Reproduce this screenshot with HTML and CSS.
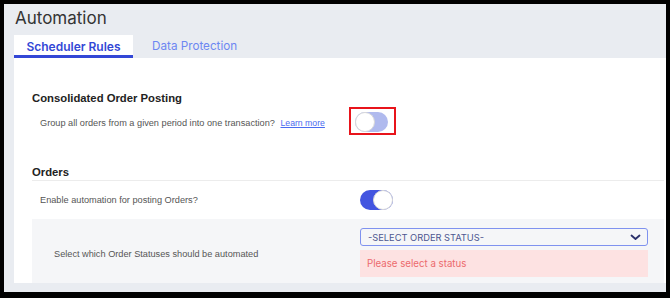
FILE: index.html
```html
<!DOCTYPE html>
<html lang="en">
<head>
    <meta charset="UTF-8">
    <meta name="viewport" content="width=device-width, initial-scale=1.0">
    <title>Automation</title>
    <link rel="stylesheet" href="styles.css">
</head>
<body>
    <div class="frame">
        <div class="page-title">Automation</div>
        <div class="tabs">
            <div class="tab active">Scheduler Rules</div>
            <div class="tab">Data Protection</div>
        </div>
        <div class="panel">
            <div class="section-title first">Consolidated Order Posting</div>
            <div class="row consolidated">
                <div class="label">Group all orders from a given period into one transaction? <a href="#" class="learn">Learn more</a></div>
                <div class="highlight">
                    <span class="toggle off"><span class="knob"></span></span>
                </div>
            </div>

            <div class="section-title orders">Orders</div>
            <div class="row enable">
                <div class="label">Enable automation for posting Orders?</div>
                <span class="toggle on"><span class="knob"></span></span>
            </div>
            <div class="row statuses">
                <div class="label">Select which Order Statuses should be automated</div>
                <div class="field">
                    <div class="select">
                        <span>-SELECT ORDER STATUS-</span>
                        <svg width="11" height="7" viewBox="0 0 11 7"><path d="M1.5 1.5 L5.5 5 L9.5 1.5" fill="none" stroke="#2a306b" stroke-width="1.8" stroke-linecap="round" stroke-linejoin="round"/></svg>
                    </div>
                    <div class="error">Please select a status</div>
                </div>
            </div>
        </div>
    </div>
</body>
</html>
```

FILE: styles.css
```css
        body {
            margin: 0;
            background-color: #000;
            font-family: "Liberation Sans", Arial, sans-serif;
        }
        .frame {
            margin: 4px 4px 6px 4px;
            height: 288px;
            background-color: #e9ecf1;
            display: flex;
            flex-direction: column;
        }
        .page-title {
            font-family: Inter, "Open Sans", sans-serif;
            font-size: 17px;
            color: #333;
            padding: 4px 11px 0;
            height: 27px;
        }
        .tabs {
            display: flex;
            margin-left: 10px;
            height: 23px;
        }
        .tab {
            font-family: Inter, "Open Sans", sans-serif;
            font-size: 11.7px;
            color: #6d87f2;
            padding: 0 12px 0 19px;
            line-height: 23px;
            white-space: nowrap;
        }
        .tab.active {
            background-color: #fff;
            color: #3347d6;
            font-weight: 600;
            font-size: 12px;
            padding: 0;
            width: 119px;
            text-align: center;
            border-bottom: 3px solid #3347d6;
            line-height: 23px;
            height: 20px;
        }
        .panel {
            flex: 1;
            background-color: #fff;
            margin: 0 0 9px 10px;
            padding: 0 2px 0 18px;
        }
        .section-title {
            font-size: 11.3px;
            font-weight: bold;
            color: #222;
            line-height: 14px;
        }
        .section-title.first {
            padding-top: 33px;
        }
        .section-title.orders {
            margin-top: 30px;
            padding-bottom: 1px;
            border-bottom: 1px solid #ececec;
        }
        .row {
            display: flex;
            align-items: center;
        }
        .label {
            font-size: 9.2px;
            color: #555;
        }
        .consolidated {
            margin-top: 2px;
        }
        .consolidated .label {
            width: 309px;
            padding-left: 8px;
            padding-top: 3px;
        }
        .learn {
            color: #4a6cf0;
            font-size: 8.7px;
            margin-left: 3px;
        }
        .highlight {
            border: 2px solid #e8141b;
            padding: 3px 6px 1px 4px;
            display: flex;
        }
        .toggle {
            display: inline-block;
            position: relative;
            width: 33px;
            height: 20px;
            border-radius: 10px;
        }
        .toggle.off {
            background-color: #b0baee;
        }
        .toggle.on {
            background-color: #4355e0;
        }
        .knob {
            position: absolute;
            top: 0;
            width: 18px;
            height: 18px;
            border-radius: 50%;
            background-color: #fff;
            border: 1px solid #d9d9d9;
        }
        .toggle.off .knob {
            left: 0;
        }
        .toggle.on .knob {
            right: 0;
        }
        .enable {
            height: 38px;
        }
        .enable .label {
            width: 320px;
            padding-left: 8px;
        }
        .statuses {
            background-color: #f5f6f8;
            padding: 9px 16px 6px 0;
        }
        .statuses .label {
            width: 306px;
            padding-left: 22px;
            padding-top: 2px;
        }
        .field {
            flex: 1;
        }
        .select {
            display: flex;
            justify-content: space-between;
            align-items: center;
            height: 16px;
            border: 1px solid #7f92ef;
            border-radius: 3px;
            padding: 0 6px 0 7px;
            font-family: Inter, "Open Sans", sans-serif;
            font-size: 9.3px;
            color: #4d5790;
        }
        .error {
            margin-top: 4px;
            height: 27px;
            line-height: 27px;
            background-color: #fde2e2;
            color: #ec6a6d;
            font-family: Inter, "Open Sans", sans-serif;
            font-size: 9.7px;
            padding-left: 7px;
        }
```
